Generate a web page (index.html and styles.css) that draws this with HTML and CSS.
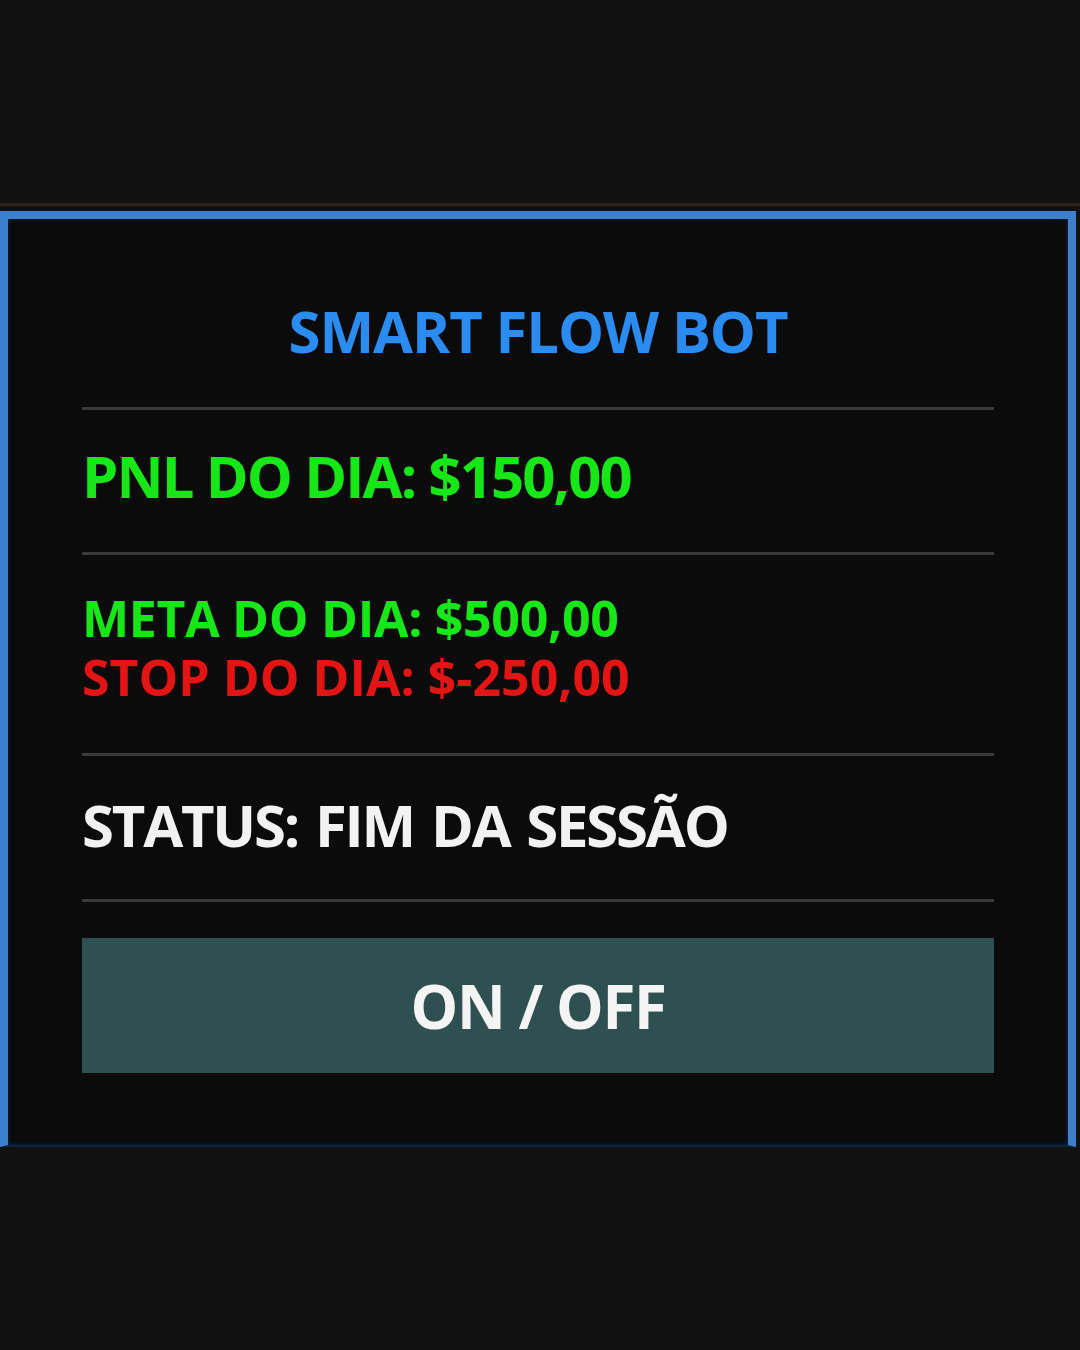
FILE: index.html
```html
<!DOCTYPE html>
<html lang="pt">
<head>
 <meta charset="UTF-8">
 <meta name="viewport" content="width=device-width, initial-scale=1.0">
 <title>Smart Flow Bot</title>
 <link rel="stylesheet" href="styles.css">
</head>
<body>
 <div class="top-rule"></div>
 <div class="panel">
   <h1 class="title">SMART FLOW BOT</h1>
   <hr class="sep">
   <div class="row pnl">PNL DO DIA: $150,00</div>
   <hr class="sep">
   <div class="limits">
     <div class="meta">META DO DIA: $500,00</div>
     <div class="stop">STOP DO DIA: $-250,00</div>
   </div>
   <hr class="sep">
   <div class="row status">STATUS: FIM DA SESSÃO</div>
   <hr class="sep">
   <button class="btn">ON / OFF</button>
 </div>
</body>
</html>
```

FILE: styles.css
```css
body { margin: 0; background: #111111; height: 1350px; font-family: "Open Sans", "Noto Sans", sans-serif; font-weight: 700; }
.top-rule { height: 3px; margin-top: 203px; background: #2a2421; }
.panel { width: 1076px; box-sizing: border-box; margin-top: 5px; border: 8px solid #3d7fcf; border-bottom: 2px solid #0c2440; background: #0b0b0b; padding: 80px 74px 72px; box-shadow: inset 0 0 4px #0a2a55; }
.title { margin: 0; text-align: center; color: #2a8cf0; font-size: 58px; line-height: 64px; font-weight: 700; letter-spacing: -1.1px; }
.sep { border: none; height: 3px; background: #3a3a3a; margin: 44px 0 34px; }
.row { font-size: 58px; line-height: 64px; }
.pnl { color: #17e617; letter-spacing: -1.9px; }
.limits { font-size: 50px; line-height: 59px; padding-bottom: 2px; }
.meta { color: #17e617; letter-spacing: -0.3px; }
.stop { color: #e31414; }
.status { color: #f2f2f2; padding-top: 3px; letter-spacing: -2.2px; word-spacing: 4px; }
.status + .sep { margin-top: 42px; }
.btn { display: block; width: 100%; height: 135px; margin-top: 36px; border: none; background: #2e5050; color: #f4f4f4; font-family: inherit; font-weight: 700; font-size: 60px; letter-spacing: -1.4px; }
.sep:last-of-type { margin-bottom: 0; }
```
